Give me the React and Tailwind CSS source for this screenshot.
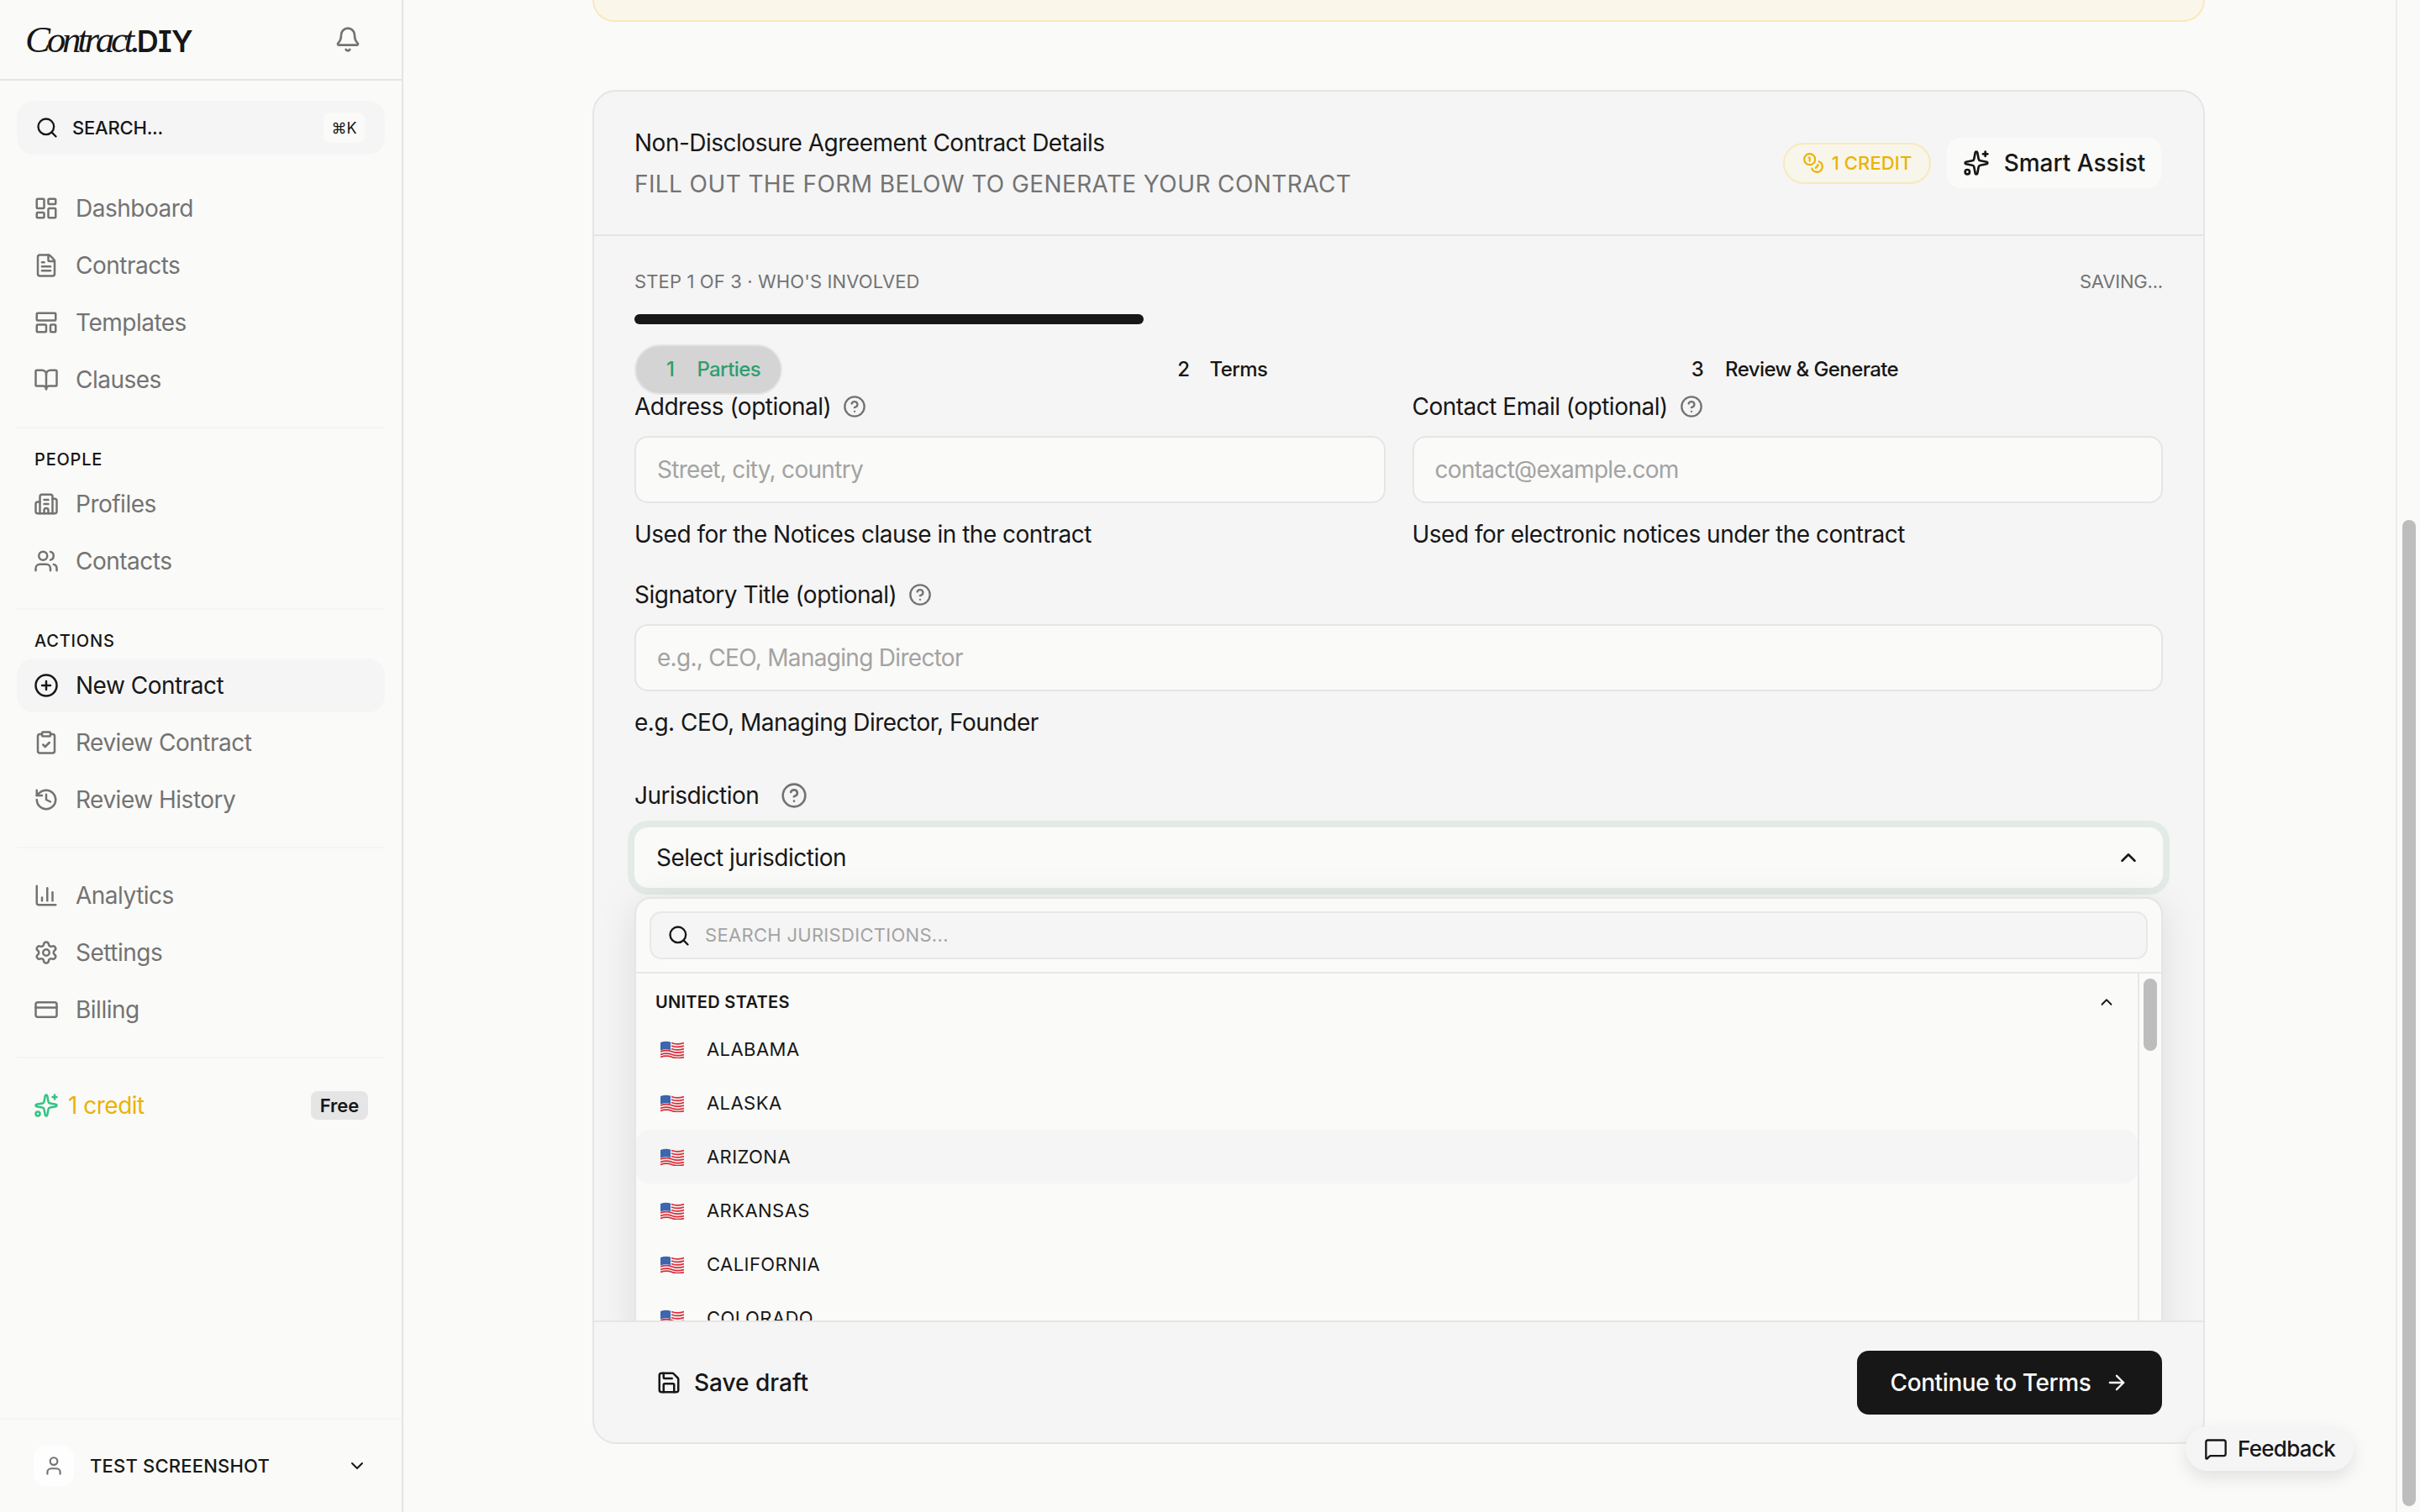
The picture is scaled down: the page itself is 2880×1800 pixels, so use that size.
import {
  ArrowRight, Bell, BookOpen, Building2, ChartColumn, ChevronDown, ChevronUp, CircleHelp, CirclePlus,
  ClipboardCheck, Coins, CreditCard, FileText, History, LayoutDashboard, LayoutTemplate, MessageSquare,
  Save, Search, Settings, Sparkles, User, Users,
} from 'lucide-react';

// Sidebar sections, top to bottom. `active` is the highlighted row.
const mainNav = [
  { label: 'Dashboard', icon: LayoutDashboard },
  { label: 'Contracts', icon: FileText },
  { label: 'Templates', icon: LayoutTemplate },
  { label: 'Clauses', icon: BookOpen },
];
const peopleNav = [
  { label: 'Profiles', icon: Building2 },
  { label: 'Contacts', icon: Users },
];
const actionNav = [
  { label: 'New Contract', icon: CirclePlus, active: true },
  { label: 'Review Contract', icon: ClipboardCheck },
  { label: 'Review History', icon: History },
];
const otherNav = [
  { label: 'Analytics', icon: ChartColumn },
  { label: 'Settings', icon: Settings },
  { label: 'Billing', icon: CreditCard },
];
const states = ['Alabama', 'Alaska', 'Arizona', 'Arkansas', 'California', 'Colorado'];

function NavList({ items }) {
  return (
    <div className="flex flex-col gap-[4px] px-[20px]">
      {items.map(({ label, icon: Icon, active }) => (
        <div
          key={label}
          className={`flex h-[64px] items-center gap-[20px] rounded-[20px] px-[20px] text-[28px] ${active ? 'bg-[#f5f5f5] text-[#171717]' : 'text-[#737373]'}`}
        >
          <Icon size={30} className="shrink-0" />
          <span>{label}</span>
        </div>
      ))}
    </div>
  );
}

function Divider() {
  return <div className="mx-[20px] mt-[24px] h-[2px] bg-[#f5f5f5]" />;
}

function SectionLabel({ children }) {
  return <div className="mb-[8px] mt-[24px] px-[41px] text-[20px] font-medium uppercase leading-[26px] tracking-[0.8px] text-[#171717]">{children}</div>;
}

function Sidebar() {
  return (
    <aside className="flex h-full w-[480px] shrink-0 flex-col border-r-2 border-[#e5e5e5]">
      <div className="flex h-[96px] shrink-0 items-center justify-between border-b-2 border-[#e5e5e5] pl-[30px] pr-[48px]">
        <div className="flex items-baseline text-[#171717]">
          <span className="font-['Liberation_Serif',serif] text-[45px] italic leading-none tracking-[-0.095em]">Contract.</span>
          <span className="text-[36px] font-semibold leading-none tracking-[-0.8px] [font-feature-settings:'cv08']">DIY</span>
        </div>
        <Bell size={32} className="text-[#737373]" />
      </div>

      <div className="mx-[20px] mb-[32px] mt-[24px] flex h-[64px] shrink-0 items-center rounded-[20px] bg-[#f5f5f5] pl-[22px] pr-[24px]">
        <Search size={28} className="shrink-0 text-[#171717]" />
        <span className="ml-[16px] text-[22px] font-medium tracking-[-0.2px] text-[#171717]">SEARCH...</span>
        <span className="ml-auto flex h-[36px] w-[49px] items-center justify-center rounded-[8px] bg-[#fafaf8] text-[18px] tracking-normal text-[#171717]">⌘K</span>
      </div>

      <NavList items={mainNav} />
      <Divider />
      <SectionLabel>People</SectionLabel>
      <NavList items={peopleNav} />
      <Divider />
      <SectionLabel>Actions</SectionLabel>
      <NavList items={actionNav} />
      <Divider />
      <div className="mt-[24px]">
        <NavList items={otherNav} />
      </div>
      <Divider />

      <div className="mt-[39px] flex h-[34px] items-center pl-[40px] pr-[40px]">
        <Sparkles size={30} className="shrink-0 text-[#34c485]" />
        <span className="ml-[11px] text-[28px] text-[#eab308]">1 credit</span>
        <span className="ml-auto flex h-[34px] w-[68px] items-center justify-center rounded-[8px] bg-[#e5e5e5] text-[22px] font-semibold tracking-normal text-[#171717]">Free</span>
      </div>

      <div className="mt-auto flex h-[112px] shrink-0 items-center border-t-2 border-[#f5f5f5] pl-[40px] pr-[41px]">
        <span className="flex h-[48px] w-[48px] items-center justify-center rounded-[14px] bg-[#fefefe]">
          <User size={26} className="text-[#737373]" />
        </span>
        <span className="ml-[19px] text-[22px] font-medium tracking-[0.2px] text-[#171717]">TEST SCREENSHOT</span>
        <ChevronDown size={24} className="ml-auto text-[#171717]" />
      </div>
    </aside>
  );
}

function FieldLabel({ children, gap = 'gap-[14px]', help = 28 }) {
  return (
    <div className={`flex h-[28px] items-center ${gap} text-[28px] leading-[28px] text-[#171717]`}>
      <span>{children}</span>
      <CircleHelp size={help} className="shrink-0 text-[#737373]" />
    </div>
  );
}

function TextField({ label, placeholder, help }) {
  return (
    <div>
      <FieldLabel>{label}</FieldLabel>
      <div className="mt-[21px] flex h-[80px] items-center rounded-[16px] border-2 border-[#e5e5e5] bg-[#fafaf8] px-[25px] text-[28px] tracking-[-0.7px] text-[#a3a3a3]">
        {placeholder}
      </div>
      <p className="mt-[23px] text-[28px] leading-[28px] text-[#171717]">{help}</p>
    </div>
  );
}

// Waving US flag; the emoji font isn't available here.
function UsFlag() {
  return (
    <svg width="28" height="22" viewBox="0 0 28 22" className="shrink-0">
      <path d="M0 3c5-2 9-2 14 0s9 1.500 14 0v17c-5 1.500-9 1.500-14 0s-9-2-14 0z" fill="#f4f4f4" />
      <g fill="none" stroke="#d92f3a" strokeWidth="1.700">
        <path d="M13 3.500c5 2 10 1.500 15 0" />
        <path d="M13 7c5 2 10 1.500 15 0" />
        <path d="M13 10.500c5 2 10 1.500 15 0" />
        <path d="M0 14c5-2 9-2 14 0s9 1.500 14 0" />
        <path d="M0 17.500c5-2 9-2 14 0s9 1.500 14 0" />
        <path d="M0 20.500c5-2 9-2 14 0s9 1.500 14 0" />
      </g>
      <path d="M0 3c4-1.600 8-1.800 12-.6v9.600c-4-1.200-8-1-12 .6z" fill="#3c66ad" />
    </svg>
  );
}

function JurisdictionSelect() {
  return (
    <div>
      <FieldLabel gap="gap-[26px]" help={32}>Jurisdiction</FieldLabel>
      <div className="mt-[24px] flex h-[72px] items-center justify-between rounded-[16px] bg-[#fafaf8] pl-[26px] pr-[26px] text-[28px] text-[#171717] ring-8 ring-[#e3ebe6]">
        <span>Select jurisdiction</span>
        <ChevronUp size={30} />
      </div>

      <div className="mt-[11px] overflow-hidden rounded-t-[20px] border-2 border-[#e5e5e5] bg-[#fafaf8] shadow-[0_8px_48px_rgba(0,0,0,0.1)]">
        <div className="border-b-2 border-[#e8e8e8] px-[16px] pb-[15px] pt-[15px]">
          <div className="flex h-[57px] items-center rounded-[14px] border-2 border-[#e8e8e8] bg-[#f5f5f5] pl-[19px]">
            <Search size={28} className="shrink-0 text-[#171717]" />
            <span className="ml-[17px] text-[22px] tracking-[0.3px] text-[#a3a3a3]">SEARCH JURISDICTIONS...</span>
          </div>
        </div>
        <div className="flex">
          <div className="min-w-0 flex-1">
            <div className="flex h-[58px] items-start justify-between pl-[23px] pr-[26px] pt-[20px]">
              <span className="text-[20px] font-semibold leading-[28px] tracking-[0.3px] text-[#171717]">UNITED STATES</span>
              <ChevronUp size={22} className="mt-[3px] text-[#171717]" />
            </div>
            {states.map((name) => (
              <div key={name} className={`flex h-[64px] items-center rounded-[16px] pl-[29px] ${name === 'Arizona' ? 'bg-[#f5f5f5]' : ''}`}>
                <UsFlag />
                <span className="ml-[27px] text-[22px] uppercase tracking-[0.44px] text-[#171717]">{name}</span>
              </div>
            ))}
          </div>
          <div className="w-[28px] shrink-0 border-l-2 border-[#e8e8e8] pl-[5px] pt-[6px]">
            <div className="h-[86px] w-[16px] rounded-full bg-[#bdbdbd]" />
          </div>
        </div>
      </div>
    </div>
  );
}

function DetailsCard() {
  return (
    <section className="mt-[81px] flex h-[1612px] flex-col overflow-hidden rounded-[28px] border-2 border-[#e5e5e5] bg-[#f5f5f5]">
      <header className="flex h-[172px] shrink-0 items-center justify-between border-b-2 border-[#e5e5e5] pl-[48px] pr-[50px]">
        <div>
          <h1 className="text-[28px] leading-[32px] text-[#171717]">Non-Disclosure Agreement Contract Details</h1>
          <p className="mt-[17px] text-[28px] leading-[32px] tracking-[0.4px] text-[#737373]">FILL OUT THE FORM BELOW TO GENERATE YOUR CONTRACT</p>
        </div>
        <div className="flex items-center gap-[19px]">
          <span className="flex h-[49px] w-[176px] items-center justify-center gap-[9px] rounded-full border-2 border-[#f8e8bc] bg-[#f8f5ea] text-[22px] font-medium tracking-[0.1px] text-[#eab308]">
            <Coins size={26} />
            1 CREDIT
          </span>
          <button className="flex h-[60px] w-[255px] items-center justify-center gap-[17px] rounded-[16px] bg-[#fafaf8] text-[28px] font-medium tracking-normal text-[#171717]">
            <Sparkles size={32} />
            Smart Assist
          </button>
        </div>
      </header>

      <div className="min-h-0 flex-1 overflow-hidden px-[48px] pt-[40px]">
        <div className="flex h-[28px] items-center justify-between text-[22px] text-[#737373]">
          <span className="tracking-[0.13px]">STEP 1 OF 3 · WHO'S INVOLVED</span>
          <span className="tracking-[-0.2px]">SAVING...</span>
        </div>
        <div className="mt-[25px] h-[12px] w-[606px] rounded-full bg-[#171717]" />

        <div className="mt-[24px] grid h-[60px] grid-cols-3 items-center text-[24px] font-medium tracking-[-0.6px] text-[#171717]">
          <div className="flex h-[60px] w-[176px] items-center gap-[27px] rounded-full border-2 border-[#e5e5e5] bg-[#d4d4d4] pl-[36px] text-[#2f9e6e]">
            <span>1</span>
            <span>Parties</span>
          </div>
          <div className="flex items-center gap-[24px] pl-[40px]">
            <span>2</span>
            <span>Terms</span>
          </div>
          <div className="flex items-center gap-[26px] pl-[45px]">
            <span>3</span>
            <span>Review &amp; Generate</span>
          </div>
        </div>

        <div className="grid grid-cols-2 gap-x-[32px]">
          <TextField label="Address (optional)" placeholder="Street, city, country" help="Used for the Notices clause in the contract" />
          <TextField label="Contact Email (optional)" placeholder="contact@example.com" help="Used for electronic notices under the contract" />
        </div>
        <div className="mt-[44px]">
          <TextField label="Signatory Title (optional)" placeholder="e.g., CEO, Managing Director" help="e.g. CEO, Managing Director, Founder" />
        </div>
        <div className="mt-[59px]">
          <JurisdictionSelect />
        </div>
      </div>

      <footer className="flex h-[145px] shrink-0 items-center justify-between border-t-2 border-[#e5e5e5] pl-[74px] pr-[49px]">
        <button className="flex items-center gap-[15px] text-[28px] font-medium tracking-normal text-[#171717]">
          <Save size={30} />
          Save draft
        </button>
        <button className="flex h-[76px] w-[363px] items-center justify-center gap-[17px] rounded-[14px] bg-[#171717] text-[28px] font-medium tracking-[-0.4px] text-[#fafaf8]">
          Continue to Terms
          <ArrowRight size={28} />
        </button>
      </footer>
    </section>
  );
}

export default function App() {
  return (
    <div className="relative flex h-screen overflow-hidden bg-[#fafaf8] font-['Inter',sans-serif] tracking-[-0.5px]">
      <Sidebar />
      <main className="min-w-0 flex-1 overflow-hidden pl-[225px]">
        <div className="w-[1919px]">
          <div className="h-[26px] rounded-b-[28px] border-2 border-t-0 border-[#f8e8bc] bg-[#faf7ea]" />
          <DetailsCard />
        </div>
      </main>
      {/* page scrollbar */}
      <div className="w-[29px] shrink-0 border-l-2 border-[#ededed] pl-[6px] pt-[619px]">
        <div className="h-[1174px] w-[16px] rounded-full bg-[#bdbdbd]" />
      </div>
      <button className="absolute left-[2601px] top-[1698px] flex h-[53px] w-[200px] items-center gap-[12px] rounded-full bg-[#f5f5f5] pl-[22px] text-[26px] font-medium tracking-[-0.7px] text-[#171717] shadow-[0_8px_20px_rgba(0,0,0,0.1)]">
        <MessageSquare size={28} />
        Feedback
      </button>
    </div>
  );
}
